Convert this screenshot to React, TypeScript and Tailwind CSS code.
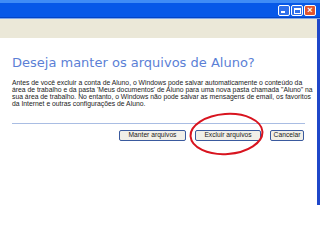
export default function App() {
  return (
    <div className="w-[320px] h-[240px] bg-[#0658e8] flex flex-col relative overflow-hidden" style={{ fontFamily: '"Liberation Sans", Arial, sans-serif' }}>
      <div className="h-[3px] shrink-0 bg-[#3f8cf6]" />
      <div className="h-[14px] shrink-0 flex items-start justify-end pt-[2px] pr-[4px] gap-[1px]">
        <div className="w-[12px] h-[11px] rounded-[2px] border border-white bg-[#2f6fea] flex items-end justify-start pl-[2px] pb-[2px]">
          <div className="w-[4px] h-[2px] bg-white" />
        </div>
        <div className="w-[12px] h-[11px] rounded-[2px] border border-white bg-[#2f6fea] flex items-center justify-center">
          <div className="w-[7px] h-[6px] border border-white border-t-2" />
        </div>
        <div className="w-[12px] h-[11px] rounded-[2px] border border-white bg-[#e0552e] flex items-center justify-center text-white text-[9px] leading-none font-bold">
          ×
        </div>
      </div>
      <div className="h-[1px] shrink-0 bg-[#0344c6]" />
      <div className="h-[1px] shrink-0 bg-[#7fa6e8]" />
      <div className="h-[186px] shrink-0 flex flex-col border-r-[3px] border-[#1f47c9]">
        <div className="h-[19px] bg-[#ebe8d8]" />
        <div className="flex-1 bg-white px-[12px] pt-[16px]">
          <div className="text-[13px] leading-[18px] text-[#5b7fd6]" style={{ fontFamily: '"DejaVu Sans", Verdana, sans-serif' }}>
            Deseja manter os arquivos de Aluno?
          </div>
          <div className="mt-[7px] text-[6.8px] leading-[7px] text-[#222] whitespace-nowrap">
            <div>Antes de você excluir a conta de Aluno, o Windows pode salvar automaticamente o conteúdo da</div>
            <div>área de trabalho e da pasta 'Meus documentos' de Aluno para uma nova pasta chamada "Aluno" na</div>
            <div>sua área de trabalho. No entanto, o Windows não pode salvar as mensagens de email, os favoritos</div>
            <div>da Internet e outras configurações de Aluno.</div>
          </div>
          <div className="mt-[16px] h-[1px] bg-[#a9bde3]" />
          <div className="mt-[6px] flex justify-end gap-[9px] pr-[1px] text-[6.7px] text-[#222]">
            <div className="w-[67px] h-[11px] border border-[#3a5a9e] rounded-[2px] bg-[#f1efe8] flex items-center justify-center">Manter arquivos</div>
            <div className="w-[66px] h-[11px] border border-[#3a5a9e] rounded-[2px] bg-[#f1efe8] flex items-center justify-center">Excluir arquivos</div>
            <div className="w-[34px] h-[11px] border border-[#3a5a9e] rounded-[2px] bg-[#f1efe8] flex items-center justify-center">Cancelar</div>
          </div>
        </div>
      </div>
      <div className="flex-1 bg-white" />
      <svg className="absolute left-[188px] top-[112px]" width="78" height="44" viewBox="188 112 78 44">
        <ellipse cx="226.5" cy="134" rx="36" ry="20" fill="none" stroke="#d8141f" strokeWidth="2" transform="rotate(-4 226.5 134)" />
      </svg>
    </div>
  );
}
